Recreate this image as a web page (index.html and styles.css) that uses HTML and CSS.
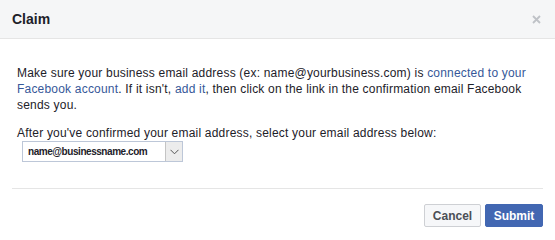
FILE: index.html
```html
<!DOCTYPE html>
<html>
<head>
<meta charset="utf-8">
<link rel="stylesheet" href="styles.css">
</head>
<body>
<div class="dialog">
  <div class="header">
    <h2 class="title">Claim</h2>
    <span class="close" aria-label="Close">
      <svg width="9" height="9" viewBox="0 0 9 9"><path d="M1 1L8 8M8 1L1 8" stroke="#bfc2c7" stroke-width="1.8" fill="none"/></svg>
    </span>
  </div>
  <div class="body">
    <div class="content">
      <p class="text">Make sure your business email address (ex: name@yourbusiness.com) is <a href="#">connected to your Facebook account</a>. If it isn't, <a href="#">add it</a>, then click on the link in the confirmation email Facebook sends you.</p>
      <p class="label">After you've confirmed your email address, select your email address below:</p>
      <div class="select">
        <span class="select-value">name@businessname.com</span>
        <span class="select-btn">
          <svg width="9" height="6" viewBox="0 0 9 6"><path d="M0.5 0.8L4.5 4.8L8.5 0.8" stroke="#555" stroke-width="1" fill="none"/></svg>
        </span>
      </div>
    </div>
    <div class="footer">
      <button class="btn btn-cancel">Cancel</button>
      <button class="btn btn-submit">Submit</button>
    </div>
  </div>
</div>
</body>
</html>
```
FILE: styles.css
```css
html, body {
  margin: 0;
  padding: 0;
  background: #fff;
}
body {
  font-family: "Liberation Sans", Arial, Helvetica, sans-serif;
  font-size: 12px;
  color: #1d2129;
}
.dialog {
  width: 555px;
  height: 237px;
  background: #fff;
}
.header {
  height: 38px;
  background: #f5f6f7;
  border-bottom: 1px solid #e5e5e5;
  display: flex;
  align-items: center;
  justify-content: space-between;
  padding: 0 14px 0 12px;
}
.title {
  margin: 0;
  font-size: 14px;
  font-weight: bold;
  color: #1d2129;
}
.close {
  display: flex;
  align-items: center;
}
.body {
  padding: 0 12px;
}
.content {
  padding: 26px 5px 26px;
  border-bottom: 1px solid #e5e5e5;
}
.text {
  margin: 0 0 12px;
  line-height: 16px;
  letter-spacing: 0.2px;
}
.text a {
  color: #365899;
  text-decoration: none;
}
.label {
  margin: 0;
  line-height: 16px;
  letter-spacing: 0.2px;
}
.select {
  margin-left: 5px;
  width: 161px;
  height: 21px;
  box-sizing: border-box;
  border: 1px solid #bdc7d8;
  display: flex;
  align-items: stretch;
  background: #fff;
}
.select-value {
  flex: 1;
  font-size: 10px;
  font-weight: bold;
  letter-spacing: -0.45px;
  padding-left: 5px;
  line-height: 19px;
  color: #1d2129;
  white-space: nowrap;
  overflow: hidden;
}
.select-btn {
  width: 16px;
  border-left: 1px solid #c4c4c4;
  background: #ececec;
  display: flex;
  align-items: center;
  justify-content: center;
}
.footer {
  display: flex;
  justify-content: flex-end;
  gap: 4px;
  padding-top: 15px;
}
.btn {
  font-family: "Liberation Sans", Arial, Helvetica, sans-serif;
  font-size: 12px;
  font-weight: bold;
  height: 23px;
  padding: 0;
  border-radius: 2px;
  box-sizing: border-box;
}
.btn-cancel {
  background: #f6f7f9;
  border: 1px solid #ced0d4;
  color: #4b4f56;
  width: 57px;
}
.btn-submit {
  background: #4267b2;
  border: 1px solid #4267b2;
  color: #fff;
  width: 58px;
}
```
